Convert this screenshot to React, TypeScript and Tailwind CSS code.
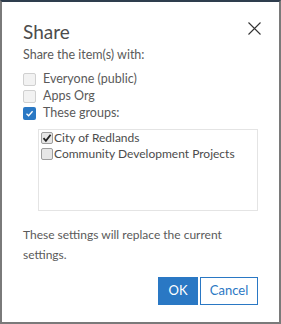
import React from "react";

function BlueBox({ checked }: { checked: boolean }) {
  return checked ? (
    <span className="flex h-[13px] w-[13px] shrink-0 items-center justify-center rounded-[2px] bg-[#2a78c4]">
      <svg width="9" height="9" viewBox="0 0 9 9" fill="none">
        <path d="M1.5 4.8 L3.6 6.8 L7.6 2.2" stroke="#fff" strokeWidth="1.3" />
      </svg>
    </span>
  ) : (
    <span className="h-[13px] w-[13px] shrink-0 rounded-[2px] border border-[#d0d0d0] bg-[#f2f2f2]" />
  );
}

function NativeBox({ checked }: { checked: boolean }) {
  return (
    <span className="flex h-[12px] w-[12px] shrink-0 items-center justify-center rounded-[2px] border border-[#9d9d9d] bg-[#e6e6e6]">
      {checked && (
        <svg width="10" height="10" viewBox="0 0 10 10">
          <path d="M1.5 5.2 L3.9 7.8 L8.6 1.8" stroke="#222" strokeWidth="1.8" fill="none" />
        </svg>
      )}
    </span>
  );
}

export default function App() {
  const options = [
    { label: "Everyone (public)", checked: false },
    { label: "Apps Org", checked: false },
    { label: "These groups:", checked: true },
  ];
  const groups = [
    { label: "City of Redlands", checked: true },
    { label: "Community Development Projects", checked: false },
  ];

  return (
    <div
      className="flex h-[324px] w-[281px] flex-col border-2 border-[#7a7a7a] border-t-[#2e3d4d] bg-white pl-[21px] pr-[21px] text-[#5a5a5a]"
      style={{ fontFamily: "Lato, 'Open Sans', sans-serif" }}
    >
      <div className="flex h-[42px] items-end justify-between">
        <h1 className="text-[19px] leading-[24px] text-[#4c4c4c]">Share</h1>
        <button className="-mr-[3px] mb-[9px]">
          <svg width="13" height="13" viewBox="0 0 13 13">
            <path d="M0.5 0.5 L12.5 12.5 M12.5 0.5 L0.5 12.5" stroke="#333" strokeWidth="1.1" />
          </svg>
        </button>
      </div>

      <p className="mt-[2px] text-[12.5px] leading-[17px]">Share the item(s) with:</p>

      <ul className="mt-[10px] flex flex-col gap-[4px]">
        {options.map((o) => (
          <li key={o.label} className="flex h-[13px] items-center gap-[7px] text-[12.5px]">
            <BlueBox checked={o.checked} />
            <span>{o.label}</span>
          </li>
        ))}
      </ul>

      <div className="ml-[15px] mt-[9px] h-[82px] border border-[#e4e4e4] px-[2px] pt-[2px]">
        <ul className="flex flex-col gap-[4px]">
          {groups.map((g) => (
            <li key={g.label} className="flex h-[12px] items-center gap-[1px] text-[12px] text-[#4c4c4c]">
              <NativeBox checked={g.checked} />
              <span>{g.label}</span>
            </li>
          ))}
        </ul>
      </div>

      <p className="mt-[14px] text-[12px] leading-[20px]">
        These settings will replace the current settings.
      </p>

      <div className="mt-auto mb-[17px] flex justify-end gap-[2px]">
        <button className="h-[28px] w-[40px] bg-[#2a78c4] text-[13px] text-white">OK</button>
        <button className="h-[28px] w-[58px] border border-[#2a78c4] bg-white text-[13px] text-[#2a78c4]">
          Cancel
        </button>
      </div>
    </div>
  );
}
